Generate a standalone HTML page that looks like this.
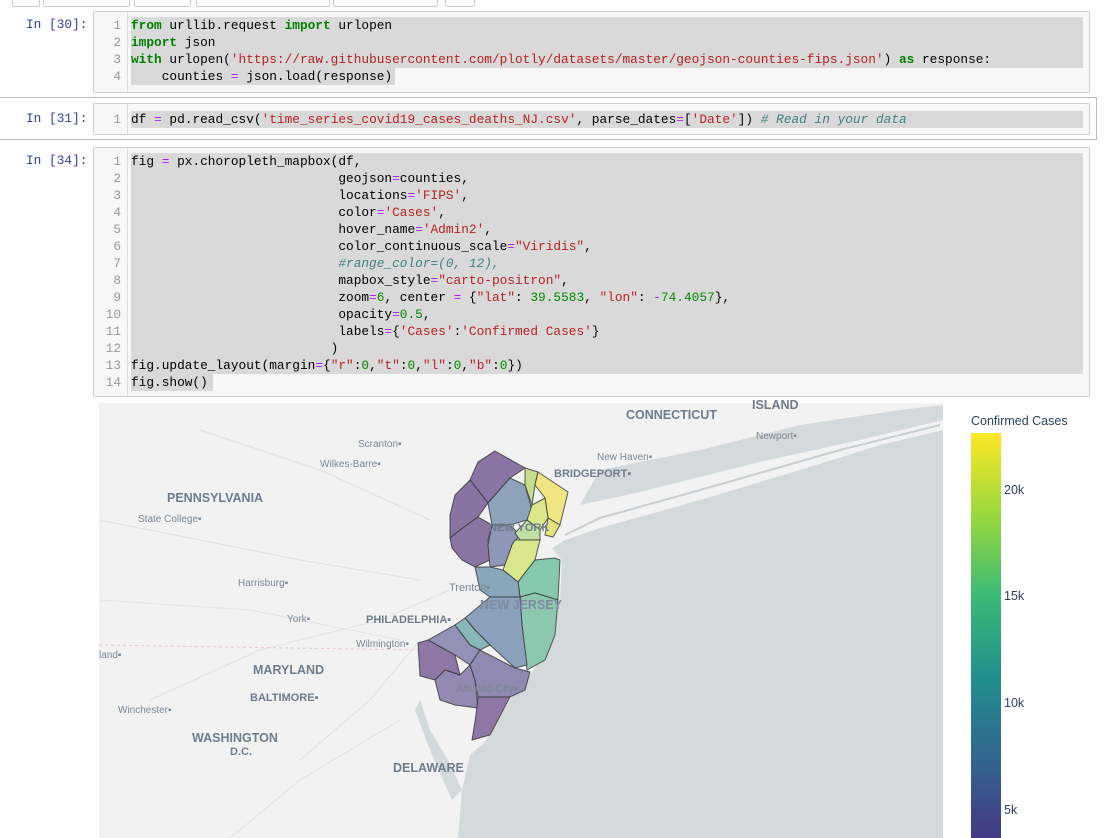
<!DOCTYPE html>
<html><head><meta charset="utf-8"><style>
body{margin:0;width:1110px;height:838px;overflow:hidden;background:#fff;font-family:"Liberation Sans",sans-serif;position:relative}
.abs{position:absolute}
.btn{position:absolute;top:-4px;height:9px;border:1px solid #ccc;border-radius:2px;background:#fff}
.prompt{position:absolute;font:12.8px "Liberation Mono",monospace;color:#303f9f}
.box{position:absolute;left:93px;width:995px;border:1px solid #cfcfcf;background:#f7f7f7;border-radius:2px}
.gut{position:absolute;left:0;top:0;bottom:0;width:33px;border-right:1px solid #ddd;background:#f7f7f7}
.ln{position:absolute;width:27px;text-align:right;font:12.8px/17px "Liberation Mono",monospace;color:#999}
.code{position:absolute;left:37px;font:12.8px/17px "Liberation Mono",monospace;color:#000;white-space:pre}
.code div{background:#d9d9d9;width:952px}
.k{color:#008000;font-weight:bold}.s{color:#ba2121}.o{color:#aa22ff}.n{color:#008800}.c{color:#408080;font-style:italic}
</style></head><body>
<div class="btn" style="left:12px;width:26px"></div>
<div class="btn" style="left:43px;width:85px"></div>
<div class="btn" style="left:134px;width:55px"></div>
<div class="btn" style="left:196px;width:132px"></div>
<div class="btn" style="left:333px;width:103px"></div>
<div class="btn" style="left:445px;width:28px"></div>

<div class="prompt" style="left:26px;top:17px">In [30]:</div>
<div class="box" style="top:11px;height:80px">
 <div class="gut"></div>
 <div class="ln" style="top:5px">1<br>2<br>3<br>4</div>
 <div class="code" style="top:5px"><div><span class="k">from</span> urllib.request <span class="k">import</span> urlopen</div><div><span class="k">import</span> json</div><div><span class="k">with</span> urlopen(<span class="s">'https://raw.githubusercontent.com/plotly/datasets/master/geojson-counties-fips.json'</span>) <span class="k">as</span> response:</div><div style="width:264px">    counties <span class="o">=</span> json.load(response)</div></div>
</div>

<div class="abs" style="left:0;top:97px;width:1096px;height:41px;border:1px solid #bbb;border-left:none"></div>
<div class="prompt" style="left:26px;top:111px">In [31]:</div>
<div class="box" style="top:103px;height:30px">
 <div class="gut"></div>
 <div class="ln" style="top:7px">1</div>
 <div class="code" style="top:7px"><div><span>df </span><span class="o">=</span> pd.read_csv(<span class="s">'time_series_covid19_cases_deaths_NJ.csv'</span>, parse_dates<span class="o">=</span>[<span class="s">'Date'</span>]) <span class="c"># Read in your data</span></div></div>
</div>

<div class="prompt" style="left:26px;top:153px">In [34]:</div>
<div class="box" style="top:147px;height:248px">
 <div class="gut"></div>
 <div class="ln" style="top:5px">1<br>2<br>3<br>4<br>5<br>6<br>7<br>8<br>9<br>10<br>11<br>12<br>13<br>14</div>
 <div class="code" style="top:5px"><div>fig <span class="o">=</span> px.choropleth_mapbox(df,</div><div>                           geojson<span class="o">=</span>counties,</div><div>                           locations<span class="o">=</span><span class="s">'FIPS'</span>,</div><div>                           color<span class="o">=</span><span class="s">'Cases'</span>,</div><div>                           hover_name<span class="o">=</span><span class="s">'Admin2'</span>,</div><div>                           color_continuous_scale<span class="o">=</span><span class="s">"Viridis"</span>,</div><div>                           <span class="c">#range_color=(0, 12),</span></div><div>                           mapbox_style<span class="o">=</span><span class="s">"carto-positron"</span>,</div><div>                           zoom<span class="o">=</span><span class="n">6</span>, center <span class="o">=</span> {<span class="s">"lat"</span>: <span class="n">39.5583</span>, <span class="s">"lon"</span>: <span class="o">-</span><span class="n">74.4057</span>},</div><div>                           opacity<span class="o">=</span><span class="n">0.5</span>,</div><div>                           labels<span class="o">=</span>{<span class="s">'Cases'</span>:<span class="s">'Confirmed Cases'</span>}</div><div>                          )</div><div>fig.update_layout(margin<span class="o">=</span>{<span class="s">"r"</span>:<span class="n">0</span>,<span class="s">"t"</span>:<span class="n">0</span>,<span class="s">"l"</span>:<span class="n">0</span>,<span class="s">"b"</span>:<span class="n">0</span>})</div><div style="width:82px">fig.show()</div></div>
</div>

<svg class="abs" style="left:0;top:0" width="1110" height="838" viewBox="0 0 1110 838">
<rect x="99" y="403" width="844" height="435" fill="#f2f2f2"/>
<g stroke="#e2e2e2" fill="none" stroke-width="1">
<path d="M99 520 L200 540 L300 560 L420 580"/><path d="M150 700 L260 650 L380 620 L450 590"/><path d="M200 430 L320 470 L430 520"/><path d="M99 600 L250 610 L400 640"/><path d="M300 760 L370 700 L420 640"/><path d="M230 838 L300 780 L400 720"/>
</g>
<path d="M99 645 L420 650" stroke="#e8c8c8" stroke-dasharray="3,3" fill="none"/>
<path d="M943 403 L943 838 L458 838 L462 790 L470 755 L485 742 L510 700 L530 675 L550 645 L560 600 L562 560 L552 548 L565 540 L600 528 L700 500 L800 470 L880 445 L943 430 Z" fill="#d4dadc"/>
<path d="M600 470 L700 450 L800 425 L900 410 L943 405 L943 420 L860 440 L760 462 L640 492 L580 505 Z" fill="#d4dadc"/>
<path d="M940 425 L840 450 L700 490 L600 518 L565 535" stroke="#c8ced2" fill="none" stroke-width="2"/>
<path d="M462 790 L448 760 L430 730 L420 700 L415 710 L430 750 L452 800 Z" fill="#d4dadc"/>
<g stroke="#333" stroke-width="1" stroke-opacity=".8">
<polygon points="495,451 525,468 510,478 488,503 470,480 478,462" fill="#8a74a3"/>
<polygon points="470,480 488,503 478,517 460,530 450,538 450,515 455,495" fill="#8873a3"/>
<polygon points="478,517 460,530 450,538 452,548 462,560 475,567 490,560 488,540 492,525" fill="#8a74a3"/>
<polygon points="488,503 510,478 525,485 532,510 527,520 510,525 492,525" fill="#8ca3b9"/>
<polygon points="492,525 510,525 520,535 512,545 505,565 490,567 488,545" fill="#8f97b8"/>
<polygon points="525,468 538,472 535,485 532,505 525,485" fill="#c5de8a"/>
<polygon points="538,472 568,492 560,525 548,518 545,498 535,485" fill="#f0e580"/>
<polygon points="532,505 545,498 548,518 540,530 527,520" fill="#dce68a"/>
<polygon points="548,518 560,525 553,537 545,535" fill="#e5e27c"/>
<polygon points="527,520 540,530 540,540 520,540 515,533" fill="#bfe0a0"/>
<polygon points="515,540 540,540 535,560 518,582 503,570 512,545" fill="#d9e68c"/>
<polygon points="518,582 535,560 555,558 560,560 558,600 535,593 520,597" fill="#86c8b0"/>
<polygon points="475,567 490,567 503,570 518,582 520,597 490,597 480,590" fill="#89a7bb"/>
<polygon points="520,597 535,593 558,600 555,635 545,660 527,670 522,625" fill="#8cc8b0"/>
<polygon points="490,597 520,597 522,625 527,665 515,668 490,645 475,630 465,618" fill="#8ba0ba"/>
<polygon points="455,625 465,618 475,630 490,645 480,650 470,645" fill="#86b8b8"/>
<polygon points="428,640 455,625 470,645 480,650 470,665 455,655" fill="#9392b6"/>
<polygon points="418,643 428,640 455,655 460,675 445,670 435,680 420,676" fill="#8f77a5"/>
<polygon points="435,680 445,670 460,675 470,665 475,680 478,708 455,705 440,700" fill="#9489b0"/>
<polygon points="470,665 480,650 515,668 530,672 525,690 510,697 478,697 475,680" fill="#9089b2"/>
<polygon points="478,697 510,697 490,735 472,740 476,715" fill="#8e76a5"/>
</g>
<g font-family="Liberation Sans,sans-serif" fill="#7b8796" font-size="10">
<text x="358" y="447">Scranton▪</text><text x="320" y="467">Wilkes-Barre▪</text><text x="138" y="522">State College▪</text><text x="238" y="586">Harrisburg▪</text><text x="287" y="622">York▪</text><text x="356" y="647">Wilmington▪</text><text x="99" y="658">land▪</text><text x="118" y="713">Winchester▪</text><text x="597" y="460">New Haven▪</text><text x="756" y="439">Newport▪</text><text x="449" y="591" font-size="11">Trenton▪</text><text x="456" y="692" font-size="11">Atlantic City▪</text>
</g>
<g font-family="Liberation Sans,sans-serif" fill="#6f7c8c" font-size="12.5" font-weight="bold">
<text x="167" y="502">PENNSYLVANIA</text><text x="366" y="623" font-size="11">PHILADELPHIA▪</text><text x="253" y="674">MARYLAND</text><text x="250" y="701" font-size="11">BALTIMORE▪</text><text x="192" y="742">WASHINGTON</text><text x="230" y="755" font-size="11">D.C.</text><text x="393" y="772">DELAWARE</text><text x="554" y="477" font-size="11">BRIDGEPORT▪</text><text x="626" y="419">CONNECTICUT</text><text x="752" y="409">ISLAND</text><text x="480" y="609" fill="#7f8aa0">NEW JERSEY</text><text x="489" y="531" fill="#6f7c8c" font-size="11">NEW YORK</text>
</g>
<defs><linearGradient id="vg" x1="0" y1="0" x2="0" y2="1"><stop offset="0" stop-color="#fde725"/><stop offset=".2" stop-color="#9bd93c"/><stop offset=".4" stop-color="#3cbb75"/><stop offset=".6" stop-color="#21908d"/><stop offset=".8" stop-color="#31678e"/><stop offset="1" stop-color="#453a84"/></linearGradient></defs>
<rect x="971" y="433" width="30" height="405" fill="url(#vg)"/>
<g font-family="Liberation Sans,sans-serif" fill="#2a3f5f" font-size="12.5">
<text x="971" y="425">Confirmed Cases</text><text x="1004" y="494">20k</text><text x="1004" y="600">15k</text><text x="1004" y="707">10k</text><text x="1004" y="814">5k</text>
</g>
</svg>
</body></html>
